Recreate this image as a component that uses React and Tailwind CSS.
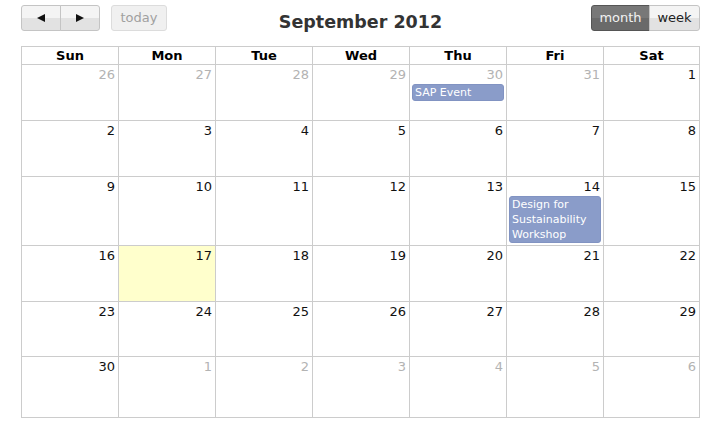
const days = ["Sun", "Mon", "Tue", "Wed", "Thu", "Fri", "Sat"];

const weeks = [
  { h: "h-[56px]", cells: [[26, 1], [27, 1], [28, 1], [29, 1], [30, 1], [31, 1], [1, 0]] },
  { h: "h-[56px]", cells: [[2, 0], [3, 0], [4, 0], [5, 0], [6, 0], [7, 0], [8, 0]] },
  { h: "h-[69px]", cells: [[9, 0], [10, 0], [11, 0], [12, 0], [13, 0], [14, 0], [15, 0]] },
  { h: "h-[56px]", cells: [[16, 0], [17, 0], [18, 0], [19, 0], [20, 0], [21, 0], [22, 0]] },
  { h: "h-[55px]", cells: [[23, 0], [24, 0], [25, 0], [26, 0], [27, 0], [28, 0], [29, 0]] },
  { h: "h-[61px]", cells: [[30, 0], [1, 1], [2, 1], [3, 1], [4, 1], [5, 1], [6, 1]] }
];

const events = {
  "0-4": "SAP Event",
  "2-5": "Design for Sustainability Workshop"
};

const lightBtn =
  "h-[26px] border border-[#c4c4c4] bg-[linear-gradient(to_bottom,#f4f4f4_50%,#e2e2e2_50%)] text-[13px] text-[#222]";

function Arrow({ dir }) {
  return (
    <svg width="8" height="8" viewBox="0 0 8 8">
      {dir === "left" ? <polygon points="8,0 8,8 0,4" fill="#111" /> : <polygon points="0,0 0,8 8,4" fill="#111" />}
    </svg>
  );
}

export default function App() {
  return (
    <div className="min-h-[428px] w-[727px] bg-white px-[21px] pt-[5px] font-['DejaVu_Sans','Verdana',sans-serif]">
      <div className="flex h-[26px] w-[679px] items-start justify-between">
        <div className="flex w-[170px] items-center">
          <div className="flex">
            <button className={`${lightBtn} flex w-[40px] items-center justify-center rounded-l-[3px]`}>
              <Arrow dir="left" />
            </button>
            <button className={`${lightBtn} -ml-px flex w-[40px] items-center justify-center rounded-r-[3px]`}>
              <Arrow dir="right" />
            </button>
          </div>
          <button className="ml-[11px] h-[26px] w-[56px] rounded-[3px] border border-[#dcdcdc] bg-[#f0f0f0] text-[13px] text-[#a0a0a0]">
            today
          </button>
        </div>
        <h2 className="mt-[7px] text-[17.5px] font-bold leading-[20px] text-[#333]">September 2012</h2>
        <div className="flex w-[170px] justify-end">
          <button className="h-[26px] w-[59px] rounded-l-[3px] border border-[#555] bg-[linear-gradient(to_bottom,#787878_50%,#6a6a6a_50%)] text-[13px] text-[#f2f2f2]">
            month
          </button>
          <button className={`${lightBtn} -ml-px w-[51px] rounded-r-[3px]`}>week</button>
        </div>
      </div>

      <div className="mt-[15px] w-[679px] border-l border-t border-[#cccccc]">
        <div className="grid grid-cols-[97px_97px_97px_97px_97px_97px_96px]">
          {days.map((d) => (
            <div
              key={d}
              className="h-[18px] border-b border-r border-[#cccccc] text-center text-[13px] font-bold leading-[17px] text-black"
            >
              {d}
            </div>
          ))}
        </div>
        {weeks.map((w, wi) => (
          <div key={wi} className="grid grid-cols-[97px_97px_97px_97px_97px_97px_96px]">
            {w.cells.map(([n, other], ci) => {
              const ev = events[`${wi}-${ci}`];
              const today = wi === 3 && ci === 1;
              return (
                <div
                  key={ci}
                  className={`${w.h} border-b border-r border-[#cccccc] ${today ? "bg-[#ffffcc]" : "bg-white"}`}
                >
                  <div
                    className={`pr-[3px] pt-[2px] text-right text-[13px] leading-[16px] ${
                      other ? "text-[#b3b3b3]" : "text-[#111]"
                    }`}
                  >
                    {n}
                  </div>
                  {ev && (
                    <div className="mx-[2px] mt-[1px] rounded-[3px] border border-[#8193c2] bg-[#8a9cc9] px-[2px] text-[11px] leading-[15px] text-white">
                      {ev}
                    </div>
                  )}
                </div>
              );
            })}
          </div>
        ))}
      </div>
    </div>
  );
}
